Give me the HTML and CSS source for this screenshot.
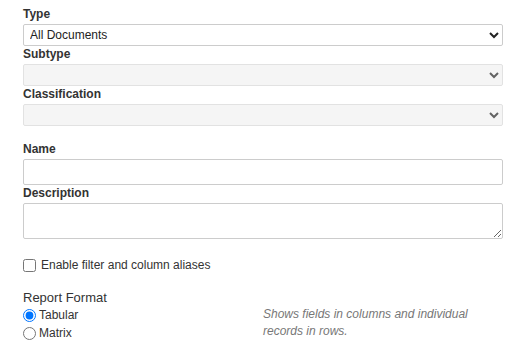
FILE: index.html
```
<!DOCTYPE html>
<html>
<head>
  <title>New Report</title>
  <link rel="stylesheet" href="styles.css">
</head>
<body>
  <form class="report-form">
    <div class="field">
      <label for="type">Type</label>
      <select id="type">
        <option>All Documents</option>
      </select>
    </div>
    <div class="field">
      <label for="subtype">Subtype</label>
      <select id="subtype" disabled>
        <option></option>
      </select>
    </div>
    <div class="field">
      <label for="classification">Classification</label>
      <select id="classification" disabled>
        <option></option>
      </select>
    </div>

    <div class="field field-name">
      <label for="name">Name</label>
      <input type="text" id="name">
    </div>
    <div class="field">
      <label for="description">Description</label>
      <textarea id="description"></textarea>
    </div>

    <div class="check-row">
      <input type="checkbox" id="aliases">
      <label for="aliases">Enable filter and column aliases</label>
    </div>

    <div class="format">
      <div class="format-title">Report Format</div>
      <div class="format-body">
        <div class="format-options">
          <div class="radio-row">
            <input type="radio" name="format" id="tabular" checked>
            <label for="tabular">Tabular</label>
          </div>
          <div class="radio-row">
            <input type="radio" name="format" id="matrix">
            <label for="matrix">Matrix</label>
          </div>
        </div>
        <p class="format-help">Shows fields in columns and individual records in rows.</p>
      </div>
    </div>
  </form>
</body>
</html>
```

FILE: styles.css
```
body {
  margin: 0;
  font-family: "Liberation Sans", Arial, sans-serif;
  font-size: 12px;
  color: #333;
  background-color: #fff;
}
.report-form {
  width: 480px;
  padding: 6px 0 0 23px;
}
.field label {
  display: block;
  font-weight: bold;
  line-height: 16px;
  margin-bottom: 2px;
}
.field-name {
  margin-top: 15px;
}
select,
input[type="text"],
textarea {
  display: block;
  box-sizing: border-box;
  width: 480px;
  margin: 0;
  border: 1px solid #ccc;
  border-radius: 2px;
  font-family: "Liberation Sans", Arial, sans-serif;
  font-size: 12px;
  color: #222;
  background-color: #fff;
}
select {
  height: 22px;
  padding: 0 2px;
}
select:disabled {
  background-color: #f2f2f2;
  border-color: #d6d6d6;
}
input[type="text"] {
  height: 26px;
  padding: 2px 4px;
}
textarea {
  height: 36px;
  padding: 2px 4px;
}
.check-row {
  display: flex;
  align-items: center;
  margin-top: 18px;
  line-height: 16px;
}
.check-row input {
  margin: 0 5px 0 0;
  width: 13px;
  height: 13px;
}
.format {
  margin-top: 16px;
}
.format-title {
  font-size: 13px;
  line-height: 17px;
}
.format-body {
  display: flex;
}
.format-options {
  width: 240px;
}
.radio-row {
  display: flex;
  align-items: center;
  line-height: 18px;
}
.radio-row input {
  margin: 0 3px 0 0;
  width: 13px;
  height: 13px;
}
.format-help {
  margin: 0;
  width: 220px;
  font-style: italic;
  color: #777;
  line-height: 17px;
}
```
